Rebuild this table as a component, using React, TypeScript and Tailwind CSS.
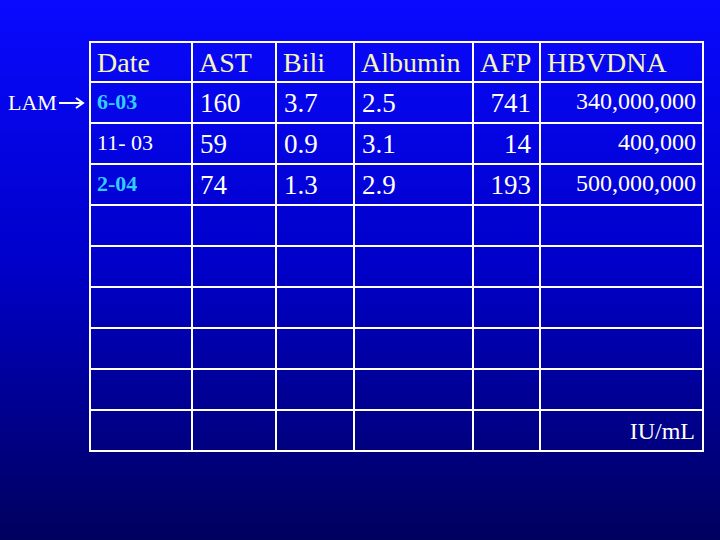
type Row = {
  date: string;
  dateTone: "cyan" | "white";
  ast: string;
  bili: string;
  albumin: string;
  afp: string;
  dna: string;
};

const rows: Row[] = [
  { date: "6-03", dateTone: "cyan", ast: "160", bili: "3.7", albumin: "2.5", afp: "741", dna: "340,000,000" },
  { date: "11- 03", dateTone: "white", ast: "59", bili: "0.9", albumin: "3.1", afp: "14", dna: "400,000" },
  { date: "2-04", dateTone: "cyan", ast: "74", bili: "1.3", albumin: "2.9", afp: "193", dna: "500,000,000" },
];

const headers = ["Date", "AST", "Bili", "Albumin", "AFP", "HBVDNA"];
const colWidths = ["w-[102px]", "w-[84px]", "w-[78px]", "w-[119px]", "w-[67px]", "w-[163px]"];

const cell = "border-2 border-white p-0 align-top";

function Arrow() {
  return (
    <svg width="27" height="14" viewBox="0 0 27 14" className="ml-[1px]">
      <path d="M1 7 H24" stroke="white" strokeWidth="2" />
      <path d="M18 2 L25 7 L18 12" stroke="white" strokeWidth="2" fill="none" />
    </svg>
  );
}

export default function App() {
  return (
    <div
      className="h-[540px] w-[720px] overflow-hidden bg-gradient-to-b from-[#0a0aff] via-[#0000c8] to-[#00005e] text-white"
      style={{ fontFamily: '"Liberation Serif", "Times New Roman", serif' }}
    >
      <div className="flex pt-[41px]">
        {/* arrow label sits in the gutter left of the table */}
        <div className="w-[89px] shrink-0 pt-[51px] pl-[8px]">
          <span className="flex items-center text-[22px] leading-none">
            LAM
            <Arrow />
          </span>
        </div>

        <table className="w-[613px] table-fixed border-collapse">
          <colgroup>
            {colWidths.map((w) => (
              <col key={w} className={w} />
            ))}
          </colgroup>
          <thead>
            <tr className="h-[40px]">
              {headers.map((h) => (
                <th
                  key={h}
                  className={`${cell} pl-[6px] pt-[6px] text-left text-[28px] font-normal leading-none text-[#f4f4bc]`}
                >
                  {h}
                </th>
              ))}
            </tr>
          </thead>
          <tbody>
            {rows.map((r) => (
              <tr key={r.date} className="h-[41px]">
                <td
                  className={`${cell} pl-[6px] pt-[8px] text-[22px] leading-none ${
                    r.dateTone === "cyan" ? "font-bold text-[#33ccff]" : "text-white"
                  }`}
                >
                  {r.date}
                </td>
                <td className={`${cell} pl-[7px] pt-[7px] text-[27px] leading-none`}>{r.ast}</td>
                <td className={`${cell} pl-[7px] pt-[7px] text-[27px] leading-none`}>{r.bili}</td>
                <td className={`${cell} pl-[7px] pt-[7px] text-[27px] leading-none`}>{r.albumin}</td>
                <td className={`${cell} pr-[8px] pt-[7px] text-right text-[27px] leading-none`}>{r.afp}</td>
                <td className={`${cell} pr-[6px] pt-[6px] text-right text-[24px] leading-none`}>{r.dna}</td>
              </tr>
            ))}
            {[0, 1, 2, 3, 4, 5].map((n) => (
              <tr key={n} className="h-[41px]">
                <td className={cell} />
                <td className={cell} />
                <td className={cell} />
                <td className={cell} />
                <td className={cell} />
                <td className={`${cell} pr-[7px] pt-[8px] text-right text-[24px] leading-none`}>
                  {n === 5 ? "IU/mL" : ""}
                </td>
              </tr>
            ))}
          </tbody>
        </table>
      </div>
    </div>
  );
}
